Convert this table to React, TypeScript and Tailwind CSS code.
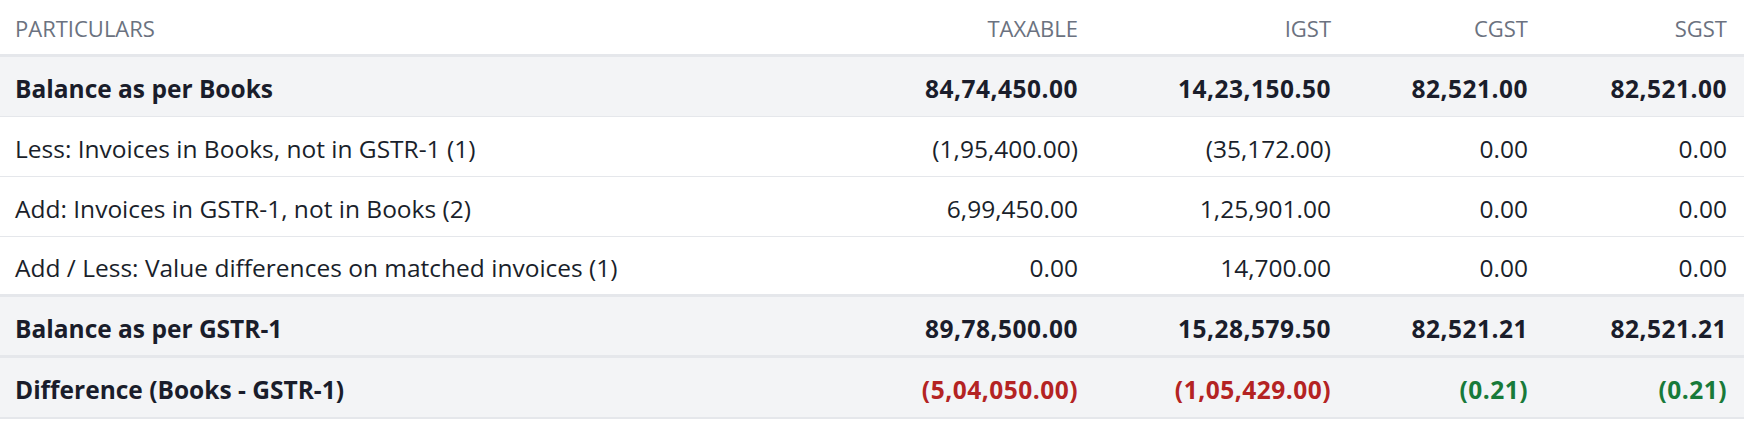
import React from "react";

type Row = {
  label: string;
  vals: string[];
  kind: "summary" | "detail" | "diff";
  border: string;
};

const rows: Row[] = [
  { label: "Balance as per Books", vals: ["84,74,450.00", "14,23,150.50", "82,521.00", "82,521.00"], kind: "summary", border: "border-b h-[60px]" },
  { label: "Less: Invoices in Books, not in GSTR-1 (1)", vals: ["(1,95,400.00)", "(35,172.00)", "0.00", "0.00"], kind: "detail", border: "border-b h-[60px]" },
  { label: "Add: Invoices in GSTR-1, not in Books (2)", vals: ["6,99,450.00", "1,25,901.00", "0.00", "0.00"], kind: "detail", border: "border-b h-[60px]" },
  { label: "Add / Less: Value differences on matched invoices (1)", vals: ["0.00", "14,700.00", "0.00", "0.00"], kind: "detail", border: "border-b-[3px] h-[60px]" },
  { label: "Balance as per GSTR-1", vals: ["89,78,500.00", "15,28,579.50", "82,521.21", "82,521.21"], kind: "summary", border: "border-b-[3px] h-[61px]" },
  { label: "Difference (Books - GSTR-1)", vals: ["(5,04,050.00)", "(1,05,429.00)", "(0.21)", "(0.21)"], kind: "diff", border: "border-b-2 h-[61px]" },
];

const diffColors = ["text-[#b42323]", "text-[#b42323]", "text-[#187a3a]", "text-[#187a3a]"];

export default function App() {
  return (
    <div
      className="w-[1744px] h-[422px] bg-white text-[24.5px]"
      style={{ fontFamily: '"Open Sans", "Noto Sans", sans-serif' }}
    >
      <div className="grid grid-cols-[1fr_220px_253px_197px_199px] pl-[15px] pr-[17px] pt-[3px] h-[57px] items-center border-b-[3px] border-[#e5e7eb] text-[#6b7280] text-[22px] uppercase">
        <div>Particulars</div>
        <div className="text-right">Taxable</div>
        <div className="text-right">IGST</div>
        <div className="text-right">CGST</div>
        <div className="text-right">SGST</div>
      </div>
      {rows.map((r, i) => (
        <div
          key={i}
          className={`grid grid-cols-[1fr_220px_253px_197px_199px] pl-[15px] pr-[17px] pt-[6px] items-center border-[#e5e7eb] ${r.border} ${
            r.kind === "detail" ? "bg-white text-[#1a1f2b]" : "bg-[#f3f4f6] font-bold text-[#1a1d2b]"
          }`}
        >
          <div>{r.label}</div>
          {r.vals.map((v, j) => (
            <div
              key={j}
              className={`text-right ${r.kind === "detail" ? "" : "tracking-[0.5px]"} ${r.kind === "diff" ? diffColors[j] : ""}`}
            >
              {v}
            </div>
          ))}
        </div>
      ))}
    </div>
  );
}
